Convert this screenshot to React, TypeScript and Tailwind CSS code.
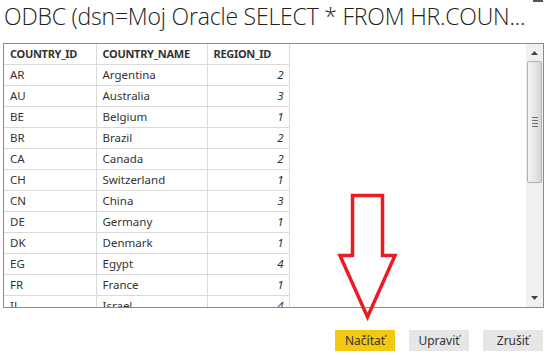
const rows: [string, string, number][] = [
  ['AR', 'Argentina', 2],
  ['AU', 'Australia', 3],
  ['BE', 'Belgium', 1],
  ['BR', 'Brazil', 2],
  ['CA', 'Canada', 2],
  ['CH', 'Switzerland', 1],
  ['CN', 'China', 3],
  ['DE', 'Germany', 1],
  ['DK', 'Denmark', 1],
  ['EG', 'Egypt', 4],
  ['FR', 'France', 1],
  ['IL', 'Israel', 4],
];

function Scrollbar() {
  return (
    <div className="w-[17px] bg-[#f0f0f0] flex flex-col items-center py-px">
      <div className="h-[16px] w-full flex items-center justify-center">
        <svg width="7" height="4" viewBox="0 0 7 4">
          <path d="M0 4 L3.5 0 L7 4 Z" fill="#404040" />
        </svg>
      </div>
      <div className="h-[122px] w-[15px] rounded-[2px] border border-[#b2b2b2] bg-gradient-to-r from-[#f4f4f4] via-[#e6e6e6] to-[#d6d6d6] flex flex-col items-center justify-center gap-[2px]">
        <div className="w-[6px] h-px bg-[#707070]" />
        <div className="w-[6px] h-px bg-[#707070]" />
        <div className="w-[6px] h-px bg-[#707070]" />
        <div className="w-[6px] h-px bg-[#707070]" />
      </div>
      <div className="flex-1" />
      <div className="h-[16px] w-full flex items-center justify-center">
        <svg width="7" height="4" viewBox="0 0 7 4">
          <path d="M0 0 L7 0 L3.5 4 Z" fill="#404040" />
        </svg>
      </div>
    </div>
  );
}

export default function App() {
  return (
    <div className="relative w-[549px] h-[355px] bg-white overflow-hidden font-['Open_Sans',sans-serif] text-[#333]">
      <div className="absolute left-[533px] top-0 w-[10px] h-[2px] bg-[#555]" />
      <h1 className="pl-[4px] pt-[1px] h-[42px] text-[23px] font-light leading-[30px] text-[#222] tracking-[-0.2px] whitespace-nowrap">
        ODBC (dsn=Moj Oracle SELECT * FROM HR.COUN...
      </h1>
      <div className="ml-[3px] mt-px w-[541px] h-[265px] border border-[#8a8a8a] flex overflow-hidden">
        <div className="flex-1 overflow-hidden">
          <table className="border-collapse text-[11.5px] font-['Noto_Sans',sans-serif] table-fixed">
            <colgroup>
              <col className="w-[92px]" />
              <col className="w-[111px]" />
              <col className="w-[82px]" />
            </colgroup>
            <thead>
              <tr className="h-[20px]">
                <th className="border-r border-b border-[#dadada] text-left font-bold text-[11px] tracking-[-0.3px] pl-[6px] text-[#333]">COUNTRY_ID</th>
                <th className="border-r border-b border-[#dadada] text-left font-bold text-[11px] tracking-[-0.3px] pl-[6px] text-[#333]">COUNTRY_NAME</th>
                <th className="border-r border-b border-[#dadada] text-left font-bold text-[11px] tracking-[-0.3px] pl-[6px] text-[#333]">REGION_ID</th>
              </tr>
            </thead>
            <tbody>
              {rows.map(([id, name, region]) => (
                <tr key={id} className="h-[21px]">
                  <td className="border-r border-b border-[#dadada] pl-[6px] text-[#333]">{id}</td>
                  <td className="border-r border-b border-[#dadada] pl-[6px] text-[#333]">{name}</td>
                  <td className="border-r border-b border-[#dadada] pr-[5px] text-right italic text-[#333]">{region}</td>
                </tr>
              ))}
            </tbody>
          </table>
        </div>
        <Scrollbar />
      </div>
      <div className="flex justify-end gap-[14px] pr-[6px] mt-[22px] text-[12px] font-['Noto_Sans',sans-serif]">
        <button className="w-[60px] h-[21px] bg-[#f2c811] text-[#333]">Načítať</button>
        <button className="w-[60px] h-[21px] bg-[#e6e6e6] text-[#333]">Upraviť</button>
        <button className="w-[60px] h-[21px] bg-[#e6e6e6] text-[#333]">Zrušiť</button>
      </div>
      <svg className="absolute left-[336px] top-[192px]" width="64" height="130" viewBox="0 0 64 130">
        <path
          d="M16.5 3.5 L46.5 3.5 L46.5 63.5 L59 63.5 L31.5 125 L4 63.5 L16.5 63.5 Z"
          fill="none"
          stroke="#ed1c24"
          strokeWidth="3.5"
          strokeLinejoin="miter"
        />
      </svg>
    </div>
  );
}
